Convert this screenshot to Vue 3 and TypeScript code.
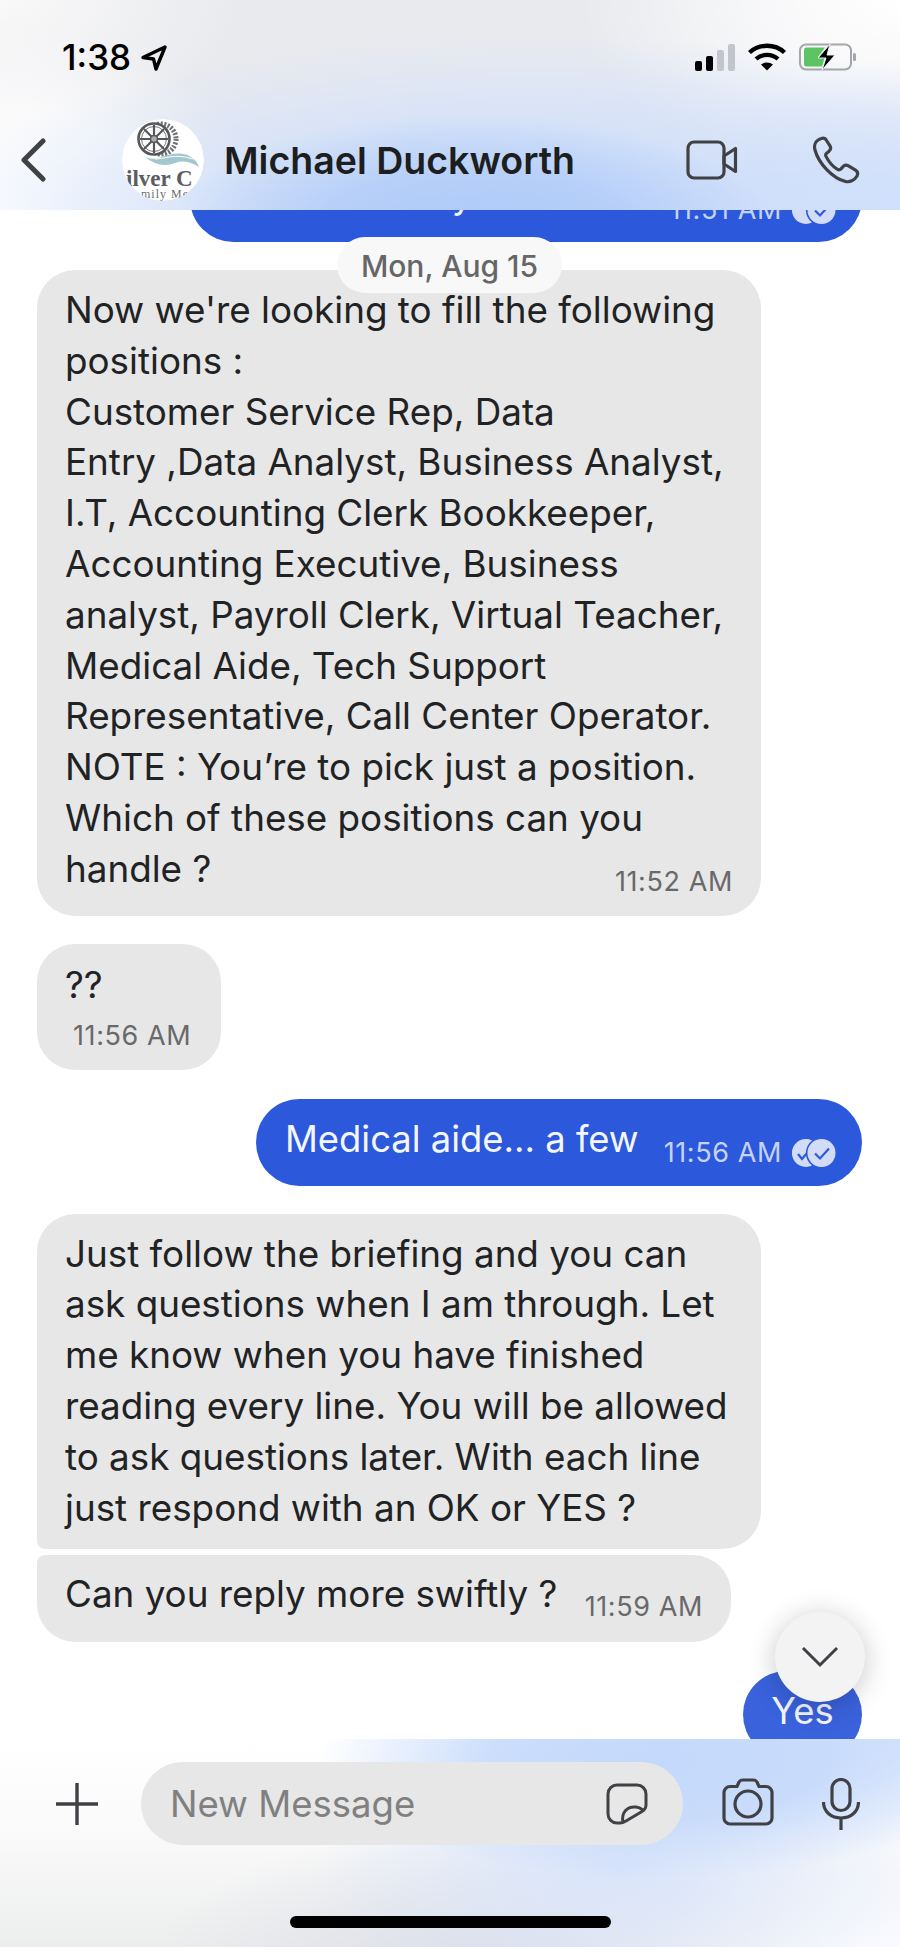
<script setup lang="ts">
// scrolled-off bubble sits partly under the header, same as the live chat
const scrollOffset = -55
</script>

<template>
  <div class="phone">
    <header class="top">
      <div class="status">
        <div class="clock">
          <span>1:38</span>
          <svg class="loc" viewBox="0 0 28 28" width="28" height="28">
            <path d="M25 3 3 13.500l10.500 1.500L16 25z" fill="none" stroke="#000" stroke-width="3.400" stroke-linejoin="round" />
          </svg>
        </div>
        <div class="sys">
          <svg viewBox="0 0 40 27" width="40" height="27">
            <rect x="0" y="17" width="7" height="10" rx="2" fill="#000" />
            <rect x="11" y="12" width="7" height="15" rx="2" fill="#000" />
            <rect x="22" y="6" width="7" height="21" rx="2" fill="#c2c6cc" />
            <rect x="33" y="0" width="7" height="27" rx="2" fill="#c2c6cc" />
          </svg>
          <svg viewBox="0 0 38 28" width="38" height="28">
            <path d="M1.500 9.500C11 .5 27 .5 36.500 9.500" fill="none" stroke="#000" stroke-width="4.400" />
            <path d="M8 16c6-5.500 16-5.500 22 0" fill="none" stroke="#000" stroke-width="4.400" />
            <path d="M13 21.500c3.500-2.800 8.500-2.800 12 0L19 27.500z" fill="#000" />
          </svg>
          <svg viewBox="0 0 58 28" width="58" height="28">
            <rect x="1" y="1.500" width="51" height="25" rx="6" fill="none" stroke="#a3a6aa" stroke-width="2" />
            <path d="M5 7a2.500 2.500 0 0 1 2.500-2.500H26L19 14h7l-3 9.500H7.500A2.500 2.500 0 0 1 5 21z" fill="#5cc463" />
            <path d="M31 1 19 15h8l-4 12 13-15h-8z" fill="#000" stroke="#e9edf5" stroke-width="1" />
            <rect x="54" y="10" width="3" height="8" rx="1.500" fill="#a3a6aa" />
          </svg>
        </div>
      </div>
      <nav class="bar">
        <svg class="back" viewBox="0 0 26 44" width="26" height="44">
          <path d="M23 3 4 22l19 19" fill="none" stroke="#3f4145" stroke-width="5" stroke-linecap="round" stroke-linejoin="round" />
        </svg>
        <svg class="avatar" viewBox="0 0 84 84" width="84" height="84">
          <defs>
            <clipPath id="avatar-clip"><circle cx="42" cy="42" r="41" /></clipPath>
          </defs>
          <g clip-path="url(#avatar-clip)">
            <circle cx="42" cy="42" r="41" fill="#fff" />
            <circle cx="40" cy="21" r="15" fill="none" stroke="#6f7073" stroke-width="5" stroke-dasharray="2 1.500" />
            <circle cx="33" cy="21" r="15.500" fill="#fff" stroke="#55575a" stroke-width="2.600" />
            <circle cx="33" cy="21" r="12.500" fill="none" stroke="#77797c" stroke-width="1" />
            <path d="M33 7v28M19 21h28M23 11l20 20M43 11 23 31" stroke="#55575a" stroke-width="2.200" />
            <circle cx="33" cy="21" r="3.500" fill="#aaa" stroke="#55575a" stroke-width="1.500" />
            <path d="M24 39c14 6 22-6 38-3 8 1 14 7 16 13-8-5-16-7-24-4-10 4-20 2-30-6z" fill="#a3c6cf" />
            <path d="M34 41c10 0 20-6 38 0" fill="none" stroke="#fff" stroke-width="1" />
            <text x="5" y="68" class="logo-big">ilver C</text>
            <text x="20" y="80" class="logo-small">mily Me</text>
          </g>
        </svg>
        <span class="name">Michael Duckworth</span>
        <svg class="video" viewBox="0 0 52 40" width="52" height="40">
          <rect x="2" y="2" width="36" height="36" rx="6" fill="none" stroke="#3f4145" stroke-width="3.200" />
          <path d="M38 16 49.500 8.500v23L38 24z" fill="none" stroke="#3f4145" stroke-width="3.200" stroke-linejoin="round" />
        </svg>
        <svg class="call" viewBox="0 0 48 48" width="48" height="48">
          <path d="M9.500 2.500C4 4 1.500 8.500 3 14c3.500 13 17 28 30.500 31.500 4 1 9-1 11.500-5.500 1.300-2.500.5-4.500-1.500-5.800l-7-4.300c-2-1.200-4-1-5.500.7l-2 2.300c-1 1-2.300 1.200-3.500.5-5-3-9-8-11.500-13-.6-1.300-.3-2.500.8-3.300l2.200-1.900c1.700-1.400 2-3.300 1-5.300L14.500 4.500c-1.100-2-3-2.700-5-2z" fill="none" stroke="#3f4145" stroke-width="3.200" stroke-linejoin="round" />
        </svg>
      </nav>
    </header>

    <main class="chat">
      <div class="list" :style="{ marginTop: scrollOffset + 'px' }">
        <div class="bubble out first">
          <div class="row">
            <span>Yes I am ready</span>
            <span class="meta">
              <span class="time">11:51 AM</span>
              <svg class="seen" viewBox="0 0 44 28" width="44" height="28">
                <path d="M14 0a14 14 0 1 0 6 26.600A16 16 0 0 1 20 1.400 14 14 0 0 0 14 0z" fill="#d3dcf6" />
                <circle cx="29.500" cy="14" r="14" fill="#d3dcf6" />
                <path d="m23 14.500 5 5 9-10" fill="none" stroke="#2e5bdc" stroke-width="2.200" />
              </svg>
            </span>
          </div>
        </div>

        <div class="bubble in large">
          Now we're looking to fill the following<br>
          positions :<br>
          Customer Service Rep, Data<br>
          Entry ,Data Analyst, Business Analyst,<br>
          I.T, Accounting Clerk Bookkeeper,<br>
          Accounting Executive, Business<br>
          analyst, Payroll Clerk, Virtual Teacher,<br>
          Medical Aide, Tech Support<br>
          Representative, Call Center Operator.<br>
          NOTE : You’re to pick just a position.<br>
          Which of these positions can you
          <div class="row">
            <span>handle ?</span>
            <span class="time">11:52 AM</span>
          </div>
        </div>

        <div class="bubble in small">
          ??
          <div class="time below">11:56 AM</div>
        </div>

        <div class="bubble out">
          <div class="row">
            <span>Medical aide... a few</span>
            <span class="meta">
              <span class="time">11:56 AM</span>
              <svg class="seen" viewBox="0 0 44 28" width="44" height="28">
                <path d="M14 0a14 14 0 1 0 6 26.600A16 16 0 0 1 20 1.400 14 14 0 0 0 14 0z" fill="#d3dcf6" />
                <path d="m6 15 4 5 5-6" fill="none" stroke="#2e5bdc" stroke-width="2.200" />
                <circle cx="29.500" cy="14" r="14" fill="#d3dcf6" />
                <path d="m23 14.500 5 5 9-10" fill="none" stroke="#2e5bdc" stroke-width="2.200" />
              </svg>
            </span>
          </div>
        </div>

        <div class="group">
          <div class="bubble in large joined-down">
            Just follow the briefing and you can<br>
            ask questions when I am through. Let<br>
            me know when you have finished<br>
            reading every line. You will be allowed<br>
            to ask questions later. With each line<br>
            just respond with an OK or YES ?
          </div>
          <div class="bubble in joined-up">
            <div class="row">
              <span>Can you reply more swiftly ?</span>
              <span class="time">11:59 AM</span>
            </div>
          </div>
        </div>

        <div class="bubble out yes">Yes</div>
      </div>

      <div class="date">Mon, Aug 15</div>
      <button class="down" type="button" aria-label="Scroll to latest">
        <svg viewBox="0 0 40 24" width="40" height="24">
          <path d="M3 3 20 20 37 3" fill="none" stroke="#3f4145" stroke-width="3" />
        </svg>
      </button>
    </main>

    <footer class="bottom">
      <div class="compose">
        <svg class="plus" viewBox="0 0 42 42" width="42" height="42">
          <path d="M21 0v42M0 21h42" stroke="#3f4145" stroke-width="3.400" />
        </svg>
        <div class="input">
          <span class="hint">New Message</span>
          <svg viewBox="0 0 42 42" width="42" height="42">
            <path d="M11 2h20a9 9 0 0 1 9 9v11c0 3-1.500 5-4 6.500L20 38c-2 1.200-4 2-6 2h-3a9 9 0 0 1-9-9V11a9 9 0 0 1 9-9z" fill="none" stroke="#3f4145" stroke-width="3" />
            <path d="M17 39c-2-9 4-16 13-15 3 .3 5 1.500 7 3" fill="none" stroke="#3f4145" stroke-width="3" />
          </svg>
        </div>
        <svg class="cam" viewBox="0 0 52 48" width="52" height="48">
          <path d="M15 8.500 17 4a4 4 0 0 1 3.500-2h11A4 4 0 0 1 35 4l2 4.500h7a6 6 0 0 1 6 6V40a6 6 0 0 1-6 6H8a6 6 0 0 1-6-6V14.500a6 6 0 0 1 6-6z" fill="none" stroke="#3f4145" stroke-width="3.200" stroke-linejoin="round" />
          <circle cx="26" cy="26" r="13" fill="none" stroke="#3f4145" stroke-width="3.200" />
        </svg>
        <svg class="mic" viewBox="0 0 38 52" width="38" height="52">
          <rect x="10" y="1.500" width="18" height="31" rx="9" fill="none" stroke="#3f4145" stroke-width="3.200" />
          <path d="M1.500 24c0 10 8 16 17.500 16s17.500-6 17.500-16M19 40v12" fill="none" stroke="#3f4145" stroke-width="3.200" />
        </svg>
      </div>
      <div class="home"></div>
    </footer>
  </div>
</template>

<style scoped>
.phone {
  width: 900px;
  height: 1947px;
  display: flex;
  flex-direction: column;
  overflow: hidden;
  background: #fff;
  font-family: Inter, "Liberation Sans", sans-serif;
  color: #1f2022;
}

.top {
  height: 210px;
  flex: none;
  position: relative;
  z-index: 2;
  background:
    radial-gradient(300px 110px at 470px 225px, #aecaf9 0%, rgba(174, 202, 249, 0.7) 50%, rgba(174, 202, 249, 0) 100%),
    radial-gradient(620px 190px at 540px 225px, rgba(195, 216, 252, 0.95) 0%, rgba(208, 224, 252, 0.65) 60%, rgba(208, 224, 252, 0) 100%),
    radial-gradient(220px 160px at 900px 220px, #cfdffb 0%, rgba(207, 223, 251, 0) 100%),
    radial-gradient(260px 190px at 0 210px, #fff 0%, rgba(255, 255, 255, 0.7) 55%, rgba(255, 255, 255, 0) 100%),
    radial-gradient(320px 190px at 900px 0, #fff 0%, rgba(255, 255, 255, 0.6) 50%, rgba(255, 255, 255, 0) 100%),
    radial-gradient(240px 130px at 0 0, #f9f9f9 0%, rgba(249, 249, 249, 0) 100%),
    #e9eaee;
}
.status {
  height: 118px;
  padding: 39px 43px 0 62px;
  box-sizing: border-box;
  display: flex;
  justify-content: space-between;
  align-items: flex-start;
}
.clock {
  display: flex;
  align-items: center;
  gap: 9px;
  font-size: 35px;
  font-weight: 500;
  line-height: 37px;
  color: #000;
}
.sys {
  display: flex;
  align-items: center;
  gap: 13px;
  padding-top: 4px;
}
.bar {
  display: flex;
  align-items: center;
  padding: 0 40px 0 20px;
  height: 84px;
}
.back { margin-right: 75px; }
.avatar { flex: none; margin-right: 19px; }
.logo-big { font: 700 23px "Liberation Serif", serif; fill: #5b5d60; }
.logo-small { font: 400 12px "Liberation Serif", serif; fill: #6a6c70; letter-spacing: 1px; }
.name {
  font-size: 37.500px;
  font-weight: 600;
  color: #1c1e20;
  flex: 1;
  white-space: nowrap;
}
.video { margin-right: 74px; margin-left: -10px; }

.chat {
  flex: 1;
  min-height: 0;
  position: relative;
  overflow: hidden;
}
.list {
  display: flex;
  flex-direction: column;
  gap: 28px;
  padding: 0 38px 0 37px;
  align-items: flex-start;
}
.bubble {
  box-sizing: border-box;
  font-size: 36.800px;
  line-height: 50.800px;
  border-radius: 38px;
  flex: none;
}
.in {
  background: #e7e7e7;
  color: #212224;
  padding: 15px 28px 21px;
}
.out {
  background: #2c58dc;
  color: #f4f6fd;
  font-size: 36.400px;
  align-self: flex-end;
  height: 87px;
  width: 606px;
  border-radius: 44px;
  padding: 15px 26px 0 29px;
  margin-top: 1px;
}
.first { width: 672px; margin-top: 0; }
.large { width: 724px; }
.small { width: 184px; height: 126px; padding-top: 16px; padding-bottom: 0; }
.row {
  display: flex;
  justify-content: space-between;
  align-items: flex-end;
}
.meta {
  display: flex;
  align-items: center;
  gap: 10px;
}
.time {
  font-size: 27px;
  line-height: 34px;
  letter-spacing: 0.6px;
  color: #68696b;
  white-space: nowrap;
}
.out .time { color: #c6d3f5; }
.out .meta { position: relative; top: 6px; }
.in .row .time { position: relative; top: 4px; }
.seen { flex: none; }
.below { margin: 9px 0 0 8px; }
.group {
  display: flex;
  flex-direction: column;
  gap: 6px;
  align-items: flex-start;
}
.joined-down { border-bottom-left-radius: 8px; padding-bottom: 16px; }
.joined-up {
  width: 694px;
  border-top-left-radius: 8px;
  height: 87px;
  padding-top: 14px;
  padding-bottom: 0;
}
.yes {
  width: 119px;
  background: #3a62dc;
  padding: 15px 0 0;
  text-align: center;
}

.date {
  position: absolute;
  top: 27px;
  left: 337px;
  width: 225px;
  height: 56px;
  border-radius: 28px;
  background: #f8f8f8;
  color: #666;
  font-size: 30px;
  font-weight: 500;
  line-height: 58px;
  text-align: center;
}
.down {
  position: absolute;
  left: 775px;
  top: 1402px;
  width: 90px;
  height: 90px;
  padding: 0;
  border: 0;
  border-radius: 50%;
  background: #f3f3f3;
  box-shadow: 0 4px 28px rgba(0, 0, 0, 0.22);
  display: flex;
  align-items: center;
  justify-content: center;
}

.bottom {
  height: 208px;
  flex: none;
  position: relative;
  z-index: 2;
  box-sizing: border-box;
  padding-top: 23px;
  background:
    radial-gradient(340px 120px at 660px 20px, #c3d8fb 0%, rgba(195, 216, 251, 0.85) 50%, rgba(195, 216, 251, 0) 100%),
    radial-gradient(260px 110px at 900px 0, #dbe7fd 0%, rgba(219, 231, 253, 0) 100%),
    radial-gradient(300px 130px at 620px 130px, #d8e4fb 0%, rgba(216, 228, 251, 0) 100%),
    radial-gradient(340px 150px at 900px 208px, #f8faff 0%, rgba(248, 250, 255, 0) 100%),
    radial-gradient(320px 130px at 480px 220px, #dcdfe8 0%, rgba(220, 223, 232, 0) 100%),
    linear-gradient(180deg, #fff 0%, #fafafa 45%, #eceded 100%);
}
.compose {
  display: flex;
  align-items: center;
  height: 83px;
  padding-left: 56px;
}
.plus { margin-right: 43px; }
.input {
  width: 542px;
  height: 83px;
  box-sizing: border-box;
  border-radius: 42px;
  background: #e7e7e7;
  display: flex;
  align-items: center;
  justify-content: space-between;
  padding: 0 35px 0 29px;
}
.hint {
  font-size: 36.500px;
  color: #808080;
}
.cam { margin-left: 39px; margin-top: -3px; }
.mic { margin-left: 48px; }
.home {
  width: 321px;
  height: 12px;
  margin: 71px 0 0 290px;
  border-radius: 6px;
  background: #000;
}
</style>

<style>
html, body { margin: 0; background: #fff; }
</style>
